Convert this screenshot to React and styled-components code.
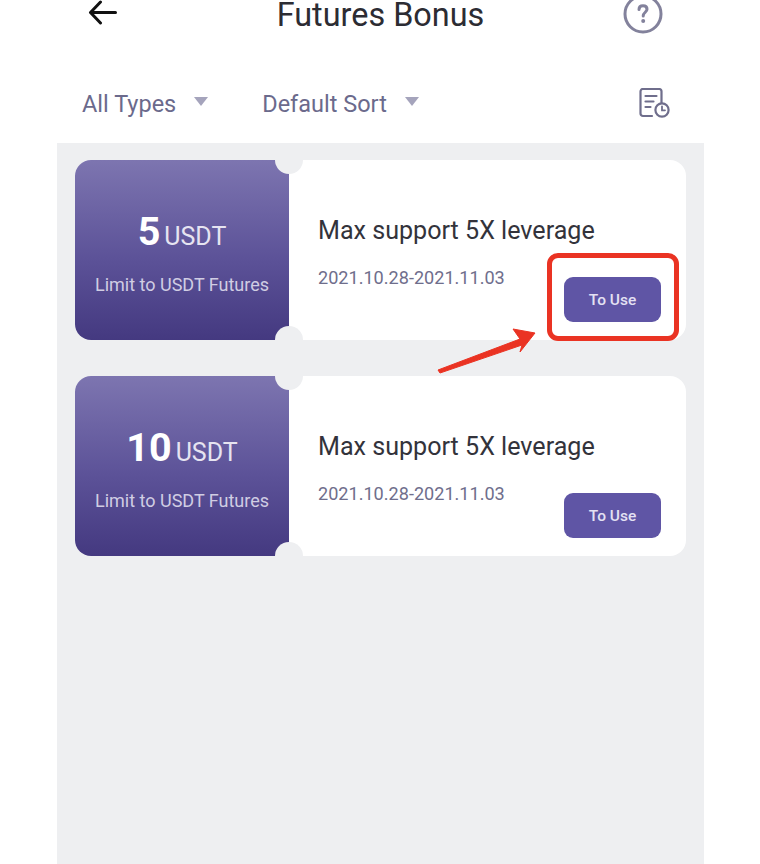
import React from "react";
import styled, { createGlobalStyle } from "styled-components";

const GlobalStyle = createGlobalStyle`
  html, body {
    margin: 0;
    background: #fff;
    font-family: Roboto, "Liberation Sans", sans-serif;
  }
`;

const Page = styled.div`
  width: 760px;
  height: 864px;
  overflow: hidden;
  position: relative;
  background: #fff;
`;

const Screen = styled.div`
  margin: 0 56px 0 57px;
  height: 864px;
  display: flex;
  flex-direction: column;
`;

const Header = styled.div`
  height: 30px;
  display: grid;
  grid-template-columns: 1fr auto 1fr;
  grid-template-rows: 30px;
  align-items: center;
  padding: 0 41px 0 30px;
`;

const BackButton = styled.div`
  width: 32px;
  height: 28px;
  margin-top: -4px;
  color: #111;
`;

const Title = styled.div`
  font-size: 32.4px;
  line-height: 30px;
  color: #2c2c33;
  padding-left: 11px;
`;

const HelpIcon = styled.div`
  justify-self: end;
  width: 40px;
  height: 40px;
  margin-top: -3px;
`;

const FilterBar = styled.div`
  height: 113px;
  padding: 35px 34px 0 25px;
  display: flex;
  align-items: center;
  box-sizing: border-box;
`;

const Filter = styled.div`
  display: flex;
  align-items: center;
  gap: 18px;
  margin-right: ${(p) => p.$gap}px;
  font-size: 23.5px;
  color: #6b6a8c;
`;

const Caret = styled.span`
  width: 0;
  height: 0;
  margin-top: -5px;
  border-left: 7.5px solid transparent;
  border-right: 7.5px solid transparent;
  border-top: 9px solid #a5a4bc;
`;

const RecordIcon = styled.div`
  margin-left: auto;
  width: 32px;
  height: 32px;
`;

const List = styled.div`
  flex: 1;
  background: #eeeff1;
  padding: 17px 18px 0;
  display: flex;
  flex-direction: column;
  gap: 36px;
`;

const Card = styled.div`
  height: 180px;
  border-radius: 16px;
  background: #fff;
  display: flex;
  position: relative;
  overflow: hidden;
`;

const Notch = styled.span`
  position: absolute;
  left: 200px;
  top: ${(p) => (p.$bottom ? "166px" : "-14px")};
  width: 28px;
  height: 28px;
  border-radius: 50%;
  background: #eeeff1;
`;

const Amount = styled.div`
  width: 214px;
  flex: none;
  background: linear-gradient(180deg, #7d75b0 0%, #5c5298 55%, #443980 100%);
  display: flex;
  flex-direction: column;
  align-items: center;
  justify-content: center;
  color: #fff;
`;

const Value = styled.div`
  display: flex;
  align-items: baseline;
  gap: 4px;
  height: 44px;
  margin-top: 4px;
`;

const Big = styled.span`
  font-size: 39.5px;
  line-height: 44px;
  font-weight: 700;
`;

const Unit = styled.span`
  font-size: 25px;
  color: #e6e4f1;
`;

const Limit = styled.div`
  margin-top: 20px;
  font-size: 18px;
  color: #d0cde3;
`;

const Body = styled.div`
  flex: 1;
  padding: 55px 25px 0 29px;
  display: flex;
  flex-direction: column;
`;

const CardTitle = styled.div`
  font-size: 25.1px;
  line-height: 32px;
  color: #33333b;
`;

const DateText = styled.div`
  margin-top: 20px;
  font-size: 18.1px;
  line-height: 22px;
  color: #6f6e8c;
`;

const UseButton = styled.div`
  align-self: flex-end;
  margin-top: -12px;
  width: 97px;
  height: 45px;
  border-radius: 9px;
  background: #5f55a5;
  color: #e4e1f3;
  font-size: 15.5px;
  font-weight: 500;
  display: flex;
  align-items: center;
  justify-content: center;
`;

const Highlight = styled.div`
  position: absolute;
  left: 547px;
  top: 253px;
  width: 132px;
  height: 88px;
  box-sizing: border-box;
  border: 5px solid #ea3323;
  border-radius: 11px;
`;

const Arrow = styled.svg`
  position: absolute;
  left: 430px;
  top: 320px;
`;

const coupons = [
  { amount: 5 },
  { amount: 10 },
];

export default function App() {
  return (
    <Page>
      <GlobalStyle />
      <Screen>
        <Header>
          <BackButton>
            <svg width="32" height="28" viewBox="0 0 32 28" fill="none" stroke="currentColor" strokeWidth="3" strokeLinecap="round" strokeLinejoin="round">
              <path d="M3.5 13.5 H28.5 M13.5 3 L3.5 13.5 L13.5 24" />
            </svg>
          </BackButton>
          <Title>Futures Bonus</Title>
          <HelpIcon>
            <svg width="40" height="40" viewBox="0 0 40 40" fill="none">
              <circle cx="20" cy="20" r="18" stroke="#83829c" strokeWidth="3" />
              <path d="M16 15.5 C16 13 17.8 11.8 20 11.8 C22.2 11.8 24 13 24 15.2 C24 18.2 20.2 18.4 20.2 22" stroke="#83829c" strokeWidth="3" strokeLinecap="round" />
              <circle cx="20.2" cy="27" r="2" fill="#83829c" />
            </svg>
          </HelpIcon>
        </Header>
        <FilterBar>
          <Filter $gap={54}>All Types<Caret /></Filter>
          <Filter $gap={0}>Default Sort<Caret /></Filter>
          <RecordIcon>
            <svg width="32" height="32" viewBox="0 0 32 32" fill="none" stroke="#6f6e8c" strokeWidth="2.2" strokeLinecap="round">
              <path d="M14 28 H5 C3.5 28 2.5 27 2.5 25.5 V3.5 C2.5 2 3.5 1 5 1 H21 C22.5 1 23.5 2 23.5 3.5 V15" />
              <path d="M7.5 8 H18.5 M7.5 13.5 H15.5 M7.5 19 H12.5" />
              <circle cx="24" cy="22" r="6.6" />
              <path d="M24 18.5 V22.3 H27" strokeWidth="1.8" />
            </svg>
          </RecordIcon>
        </FilterBar>
        <List>
          {coupons.map((c) => (
            <Card key={c.amount}>
              <Amount>
                <Value>
                  <Big>{c.amount}</Big>
                  <Unit>USDT</Unit>
                </Value>
                <Limit>Limit to USDT Futures</Limit>
              </Amount>
              <Body>
                <CardTitle>Max support 5X leverage</CardTitle>
                <DateText>2021.10.28-2021.11.03</DateText>
                <UseButton>To Use</UseButton>
              </Body>
              <Notch />
              <Notch $bottom />
            </Card>
          ))}
        </List>
      </Screen>
      <Highlight />
      <Arrow width="110" height="56" viewBox="0 0 110 56">
        <path d="M8 50 L90 19 L83 9 L105 13 L90 32 L92 25 L10 53 Z" fill="#ea3323" stroke="#ea3323" strokeWidth="1" strokeLinejoin="round" />
      </Arrow>
    </Page>
  );
}
